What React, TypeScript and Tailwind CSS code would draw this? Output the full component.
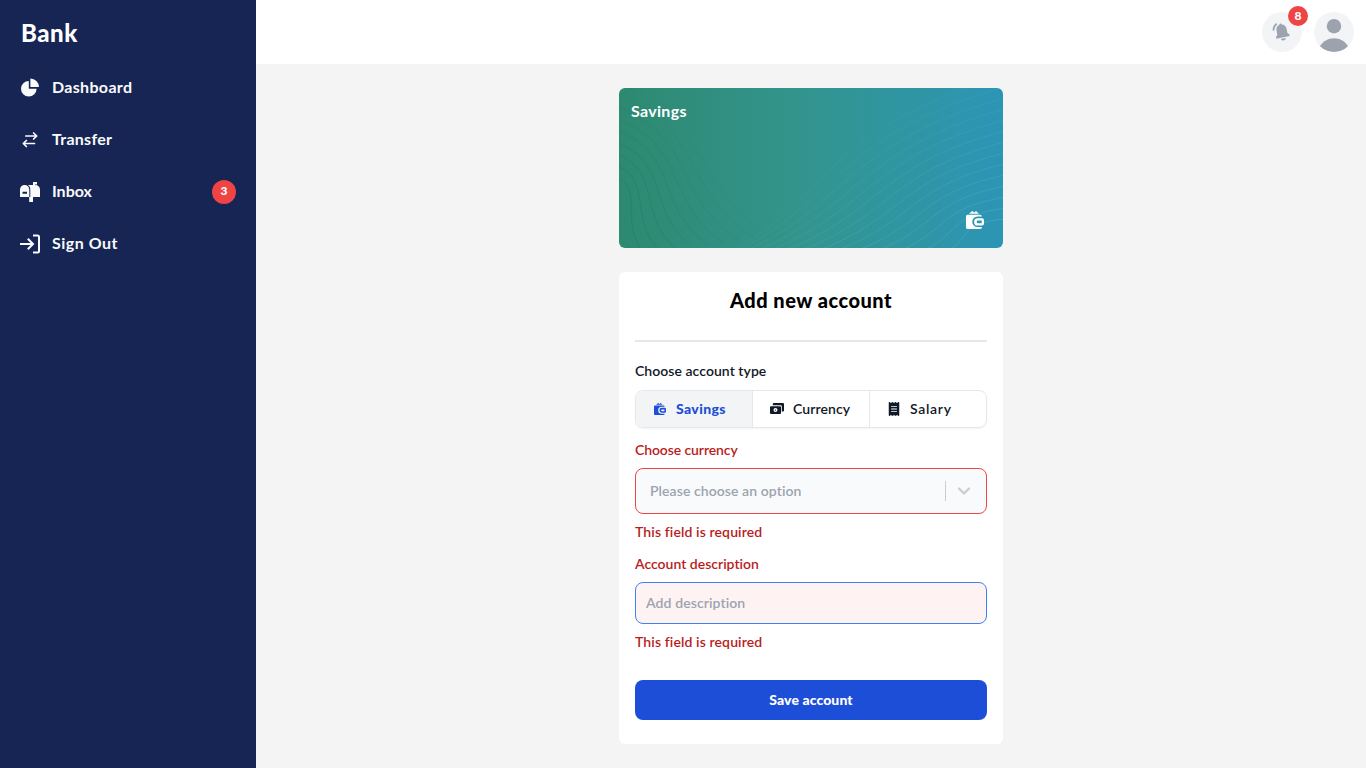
import type { ReactNode } from "react";
import { FaReceipt } from "react-icons/fa6";

function DashboardIcon() {
  return (
    <svg viewBox="0 0 20 20" className="size-5" fill="currentColor">
      <path d="M10.400.4A8.700 8.700 0 0 1 19 9H10.400z" />
      <path d="M8.800 2.900v7.900h7.800A7.800 7.800 0 1 1 8.800 2.900z" />
    </svg>
  );
}

function TransferIcon() {
  return (
    <svg viewBox="0 0 20 20" className="size-5" fill="none" stroke="currentColor" strokeWidth="1.7" strokeLinecap="round" strokeLinejoin="round">
      <path d="M5.800 6H16.700M13.600 3 16.700 6l-3.100 3M14.500 13.500H3.400M6.400 10.500 3.300 13.500l3.100 3" />
    </svg>
  );
}

function MailboxIcon() {
  return (
    <svg viewBox="0 0 20 20" className="size-5" fill="currentColor" fillRule="evenodd">
      <path d="M0 7.500A4.500 4.500 0 0 1 4.600 3 4.500 4.500 0 0 1 9.300 7.500V15H0zM2.500 9.700v2h4.500v-2z" />
      <path d="M7.800 3H13V0h4v2.600h-2V3c3 0 5 1.800 5 4.600V15h-7v5H9.200v-5h1.100V7.500C10.300 5.500 9.400 3.900 7.800 3z" />
    </svg>
  );
}

function SignOutIcon() {
  return (
    <svg viewBox="0 0 20 20" className="size-5" fill="none" stroke="currentColor" strokeWidth="2">
      <path d="M13 1.500h4.500a1.500 1.500 0 0 1 1.500 1.500v14a1.500 1.500 0 0 1-1.500 1.500H13M0 10h13M7.800 4.800 13 10l-5.200 5.200" />
    </svg>
  );
}

function WalletIcon({ className }: { className: string }) {
  return (
    <svg viewBox="0 0 18 18" className={className} fill="currentColor">
      <path d="M3 2.800 6.200 0 8.400 1.500 10 0l3 2.800z" />
      <path d="M1.500 3.800H14a2 2 0 0 1 2 1.700h-4.500a5 5 0 0 0 0 10.500H16a2 2 0 0 1-2 2H1.500A1.500 1.500 0 0 1 0 16.500V5.300a1.500 1.500 0 0 1 1.500-1.500z" />
      <path fillRule="evenodd" d="M11.800 7.200H16a2 2 0 0 1 2 2v3.400a2 2 0 0 1-2 2h-4.200a3.700 3.700 0 0 1 0-7.400zm.2 2.400a1.300 1.300 0 0 0 0 2.600h3.700V9.600z" />
    </svg>
  );
}

function CashIcon() {
  return (
    <svg viewBox="0 0 14 12" className="h-3 w-3.5" fill="currentColor" fillRule="evenodd">
      <path d="M3.800 0H13a1 1 0 0 1 1 1v6.500a1 1 0 0 1-1 1h-1.200V3.300a1 1 0 0 0-1-1H2.800V1a1 1 0 0 1 1-1z" />
      <path d="M1 3.200h9a1 1 0 0 1 1 1V10a1 1 0 0 1-1 1H1a1 1 0 0 1-1-1V4.200a1 1 0 0 1 1-1zm4.500 1.900a2 2 0 1 0 0 4 2 2 0 0 0 0-4zm0 1.300a.7.7 0 1 1 0 1.400.7.7 0 0 1 0-1.400z" />
    </svg>
  );
}

function BellIcon() {
  return (
    <svg viewBox="0 0 20 20" className="size-5 text-[#9ca3af]">
      <g transform="translate(-1 0) rotate(-11 11 10)" fill="currentColor">
        <path d="M9.800 2.500a1.200 1.200 0 0 1 2.400 0c2.500.5 3.900 2.400 3.900 5v4.300l1.700 2v1.700H4.200v-1.700l1.700-2V7.500c0-2.600 1.400-4.500 3.900-5z" />
        <path d="M8.500 16.700h5a2.500 1.900 0 0 1-5 0z" />
      </g>
      <path d="M1.500 8.500C1.400 5.500 2.500 3.200 4.800 1.700" fill="none" stroke="currentColor" strokeWidth="1.900" />
    </svg>
  );
}

function CardLines() {
  const fan = Array.from({ length: 14 }, (_, i) => i / 13);
  const rings = Array.from({ length: 9 }, (_, i) => i);
  return (
    <svg viewBox="0 0 384 160" className="absolute inset-0 h-40 w-96" fill="none">
      {fan.map((t) => (
        <path
          key={t}
          d={`M${115 + 216 * t ** 1.5} 162 C${205 + 150 * t} ${112 + 32 * t} ${210 + 130 * t} ${38 + 98 * t} 386 ${-12 + 143 * t}`}
          stroke="#7fd0d4"
          strokeOpacity={0.08 + t * 0.14}
        />
      ))}
      {rings.map((u) => (
        <path
          key={u}
          d={`M-2 ${90 - 12 * u} C${25 + 9 * u} ${100 - 8 * u} ${9 * u} ${135 - 4 * u} ${25 + 16 * u} ${165 - 2 * u}`}
          stroke="#17695f"
          strokeOpacity={0.24 - u * 0.025}
        />
      ))}
    </svg>
  );
}

function NavItem({ icon, badge, children }: { icon: ReactNode; badge?: string; children: ReactNode }) {
  return (
    <a className="flex h-10 items-center gap-3 px-2 text-gray-50">
      {icon}
      <span className="flex-1 pb-[3px] text-base leading-6 font-bold">{children}</span>
      {badge && (
        <span className="flex size-6 items-center justify-center rounded-full bg-[#ef4444] pb-0.5 text-xs font-black text-white">{badge}</span>
      )}
    </a>
  );
}

export default function App() {
  return (
    <div className="flex h-screen w-full overflow-hidden bg-[#f4f4f4] font-['Lato',sans-serif] antialiased [font-variant-ligatures:none]">
      <aside className="flex w-64 shrink-0 flex-col bg-[#172554] px-3">
        <h1 className="flex h-16 shrink-0 items-center pt-0.5 pl-[9px] text-2xl font-black tracking-[0.5px] text-white">Bank</h1>
        <nav className="mt-1 flex flex-col gap-3">
          <NavItem icon={<DashboardIcon />}>
            <span className="tracking-[0.33px]">Dashboard</span>
          </NavItem>
          <NavItem icon={<TransferIcon />}>
            <span className="tracking-[0.28px]">Transfer</span>
          </NavItem>
          <NavItem icon={<MailboxIcon />} badge="3">Inbox</NavItem>
          <NavItem icon={<SignOutIcon />}>
            <span className="tracking-[0.5px]">Sign Out</span>
          </NavItem>
        </nav>
      </aside>

      <div className="flex min-w-0 flex-1 flex-col">
        <header className="flex h-16 shrink-0 items-center justify-end gap-3 bg-white px-3">
          <button className="relative flex size-10 items-center justify-center rounded-full bg-[#f3f4f6]">
            <BellIcon />
            <span className="absolute -top-1.5 left-[26px] flex size-5 items-center justify-center rounded-full bg-[#ef4444] pb-px text-xs font-black text-white">8</span>
          </button>
          <div className="size-10 overflow-hidden rounded-full bg-[#f3f4f6] text-[#9ca3af]">
            <svg viewBox="0 0 40 40" className="size-10" fill="currentColor">
              <circle cx="20" cy="14.200" r="7.200" />
              <path d="M6 34.300C8.800 29.500 14 26.300 20 26.300s11.200 3.200 14 8C30.700 38 25.700 40 20 40S9.300 38 6 34.300z" />
            </svg>
          </div>
        </header>

        <main className="flex flex-1 flex-col items-center gap-6 py-6">
          <section className="relative flex h-40 w-96 shrink-0 flex-col justify-between overflow-hidden rounded-md bg-linear-to-r from-[#2d8970] via-[#33958f] to-[#2c95b6] text-white">
            <CardLines />
            <h2 className="relative px-3 pt-[11px] text-base leading-6 font-bold tracking-[0.3px]">Savings</h2>
            <div className="relative flex justify-end pr-[19px] pb-[19px]">
              <WalletIcon className="size-[18px]" />
            </div>
          </section>

          <section className="flex h-[472px] w-96 shrink-0 flex-col rounded-md bg-white px-4">
            <h2 className="border-b-2 border-[#e5e7eb] pt-3.5 pb-[26px] text-center text-xl leading-7 font-black tracking-[0.49px] text-black">Add new account</h2>
            <form className="flex flex-col text-sm leading-5 font-semibold">
              <label className="mt-[19px] tracking-[0.05px] text-[#111827]">Choose account type</label>
              <div className="mt-[9px] flex h-[38px] overflow-hidden rounded-lg border border-[#e5e7eb] text-[#111827] shadow-xs">
                <button type="button" className="flex w-[117px] items-center border-r border-[#e5e7eb] bg-[#f3f4f6] pl-[18px] font-black tracking-[0.38px] text-[#1d4ed8]">
                  <WalletIcon className="mr-2.5 size-3" />
                  Savings
                </button>
                <button type="button" className="flex w-[117px] items-center border-r border-[#e5e7eb] pl-[17px]">
                  <CashIcon />
                  <span className="ml-[9px] tracking-[0.08px]">Currency</span>
                </button>
                <button type="button" className="flex flex-1 items-center pl-[17px]">
                  <FaReceipt className="size-3.5" />
                  <span className="ml-[9px] tracking-[0.7px]">Salary</span>
                </button>
              </div>
              <label className="mt-3 tracking-[-0.1px] text-[#b91c1c]">Choose currency</label>
              <div className="mt-2 flex h-[46px] items-center rounded-lg border border-[#ef4444] bg-[#f9fafb] pr-[15px] pl-3.5 text-[#9ca3af]">
                <span className="flex-1 tracking-[0.08px]">Please choose an option</span>
                <span className="h-5 w-px bg-[#cccccc]" />
                <svg viewBox="0 0 14 8" className="ml-[11px] h-2 w-3.5 text-[#cccccc]" fill="none" stroke="currentColor" strokeWidth="2.200" strokeLinecap="round" strokeLinejoin="round">
                  <path d="m2 1.500 5 5 5-5" />
                </svg>
              </div>
              <p className="mt-2 tracking-[0.12px] text-[#b91c1c]">This field is required</p>
              <label className="mt-3 text-[#b91c1c]">Account description</label>
              <input placeholder="Add description" className="mt-2 h-[42px] rounded-lg border border-[#3b82f6] bg-[#fef2f2] px-2.5 pb-0.5 tracking-[0.1px] placeholder:text-[#9ca3af]" />
              <p className="mt-2 tracking-[0.12px] text-[#b91c1c]">This field is required</p>
              <button type="button" className="mt-7 h-10 rounded-lg bg-[#1d4ed8] font-black tracking-[0.1px] text-white">Save account</button>
            </form>
          </section>
        </main>
      </div>
    </div>
  );
}
